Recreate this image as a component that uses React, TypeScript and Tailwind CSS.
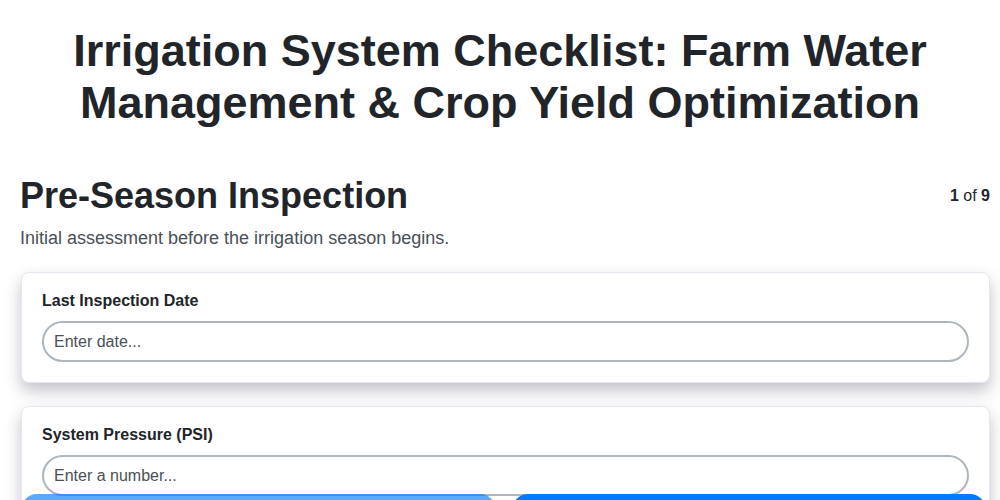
const FIELDS = [
  { label: 'Last Inspection Date', placeholder: 'Enter date...' },
  { label: 'System Pressure (PSI)', placeholder: 'Enter a number...' },
  { label: 'Water Source Condition', placeholder: 'Enter text...' },
];

export default function App() {
  return (
    <div className="min-h-screen bg-white text-[#212529] font-['Liberation_Sans',Arial,sans-serif]">
      <div className="pl-5 pr-[10px] pt-[25px] pb-24">
        <h1 className="mr-[10px] text-center text-[45px] leading-[52px] font-bold mb-[45px]">
          Irrigation System Checklist: Farm Water Management &amp; Crop Yield Optimization
        </h1>

        <div className="flex items-center justify-between">
          <h2 className="text-[36px] leading-[1.2] font-bold">Pre-Season Inspection</h2>
          <div className="text-base">
            <span className="font-bold">1</span> of <span className="font-bold">9</span>
          </div>
        </div>
        <p className="mt-2 text-[18px] leading-[27px] text-[#495057]">
          Initial assessment before the irrigation season begins.
        </p>

        <div className="mt-5 flex flex-col gap-[23px]">
          {FIELDS.map((f) => (
            <div
              key={f.label}
              className="ml-px rounded-lg border border-[#e6e6ee] bg-white px-5 pt-4 pb-5 shadow-[0_8px_16px_rgba(40,40,70,0.28)]"
            >
              <label className="block text-base font-bold leading-6 mb-2">{f.label}</label>
              <input
                type="text"
                placeholder={f.placeholder}
                className="w-full h-[41px] rounded-full border-2 border-[#adb5bd] bg-white px-[10px] text-base text-[#212529] placeholder:text-[#495057] outline-none"
              />
            </div>
          ))}
        </div>
      </div>

      <div className="fixed left-[21px] right-[14px] bottom-[-54px] flex gap-4">
        <button className="flex-1 h-[60px] rounded-2xl bg-[#007bff] opacity-65 text-white text-base font-bold">
          Previous
        </button>
        <button className="flex-1 h-[60px] rounded-2xl bg-[#007bff] text-white text-base font-bold">
          Next
        </button>
      </div>
    </div>
  );
}
